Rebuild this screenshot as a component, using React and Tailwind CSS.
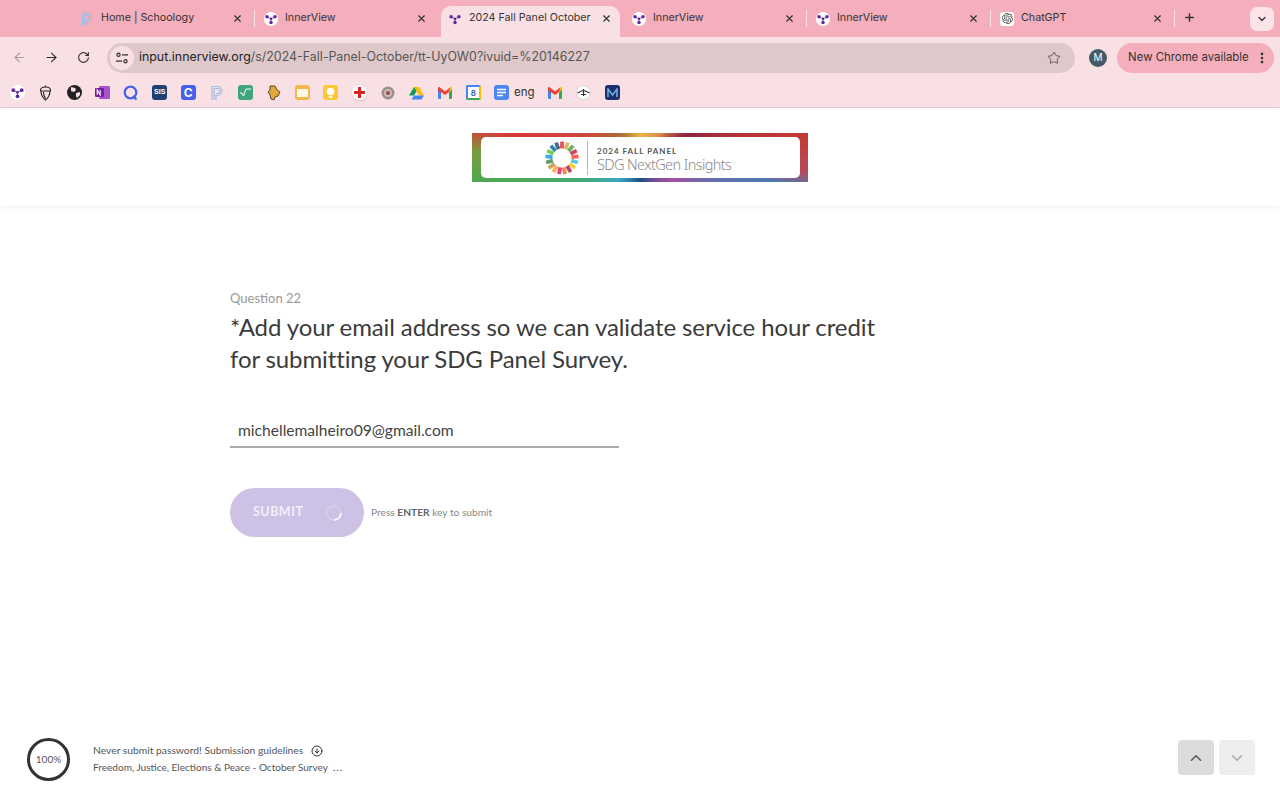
import { ArrowLeft, ArrowRight, RotateCw, Star, X, Plus, ChevronDown, ChevronUp, EllipsisVertical, CircleArrowDown } from 'lucide-react'
import { SiOpenai } from 'react-icons/si'

const chromeFont = "font-['Inter','Liberation_Sans',sans-serif]"
const pageFont = "font-['Lato','Noto_Sans',sans-serif]"

function InnerViewIcon({ size = 16, plain = false }) {
  return (
    <svg width={size} height={size} viewBox="0 0 16 16" className="shrink-0">
      {!plain && <circle cx="8" cy="8" r="8" fill="#fff" />}
      <path d="M3.500 5.500 8 7.800 12.500 5.500M8 7.800V12" stroke="#5b2a9d" strokeWidth=".8" fill="none" />
      <g fill="#5b2a9d">
        <circle cx="3.500" cy="5.500" r="2" />
        <circle cx="12.500" cy="5.500" r="2" />
        <circle cx="8" cy="7.800" r="1.500" />
        <circle cx="8" cy="12" r="2" />
      </g>
    </svg>
  )
}

function PIcon({ size = 16 }) {
  return (
    <svg width={size} height={size} viewBox="0 0 16 16" fill="none" stroke="#9dbfe6" strokeWidth="1.200" className="shrink-0">
      <path d="M3 15V1.500h5.500a4.500 4.500 0 0 1 0 9H6" />
      <path d="M5 15V3.500h3.500a2.500 2.500 0 0 1 0 5H7" />
      <path d="M7 15V10.500" />
    </svg>
  )
}

function Tab({ title, icon, active }) {
  if (active) {
    return (
      <div className="w-[184px] h-full pl-px pr-1 pt-[6px] shrink-0">
        <div className="h-[31px] bg-[#f9e0e5] rounded-t-[10px] pl-[7px] pr-[8px]">
          <div className="h-[25px] flex items-center">
            <div className="w-[14px] flex justify-center">{icon}</div>
            <span className="ml-[7px] text-[10.700px] text-[#333] flex-1 whitespace-nowrap">{title}</span>
            <X size={11} strokeWidth={2.500} className="text-[#333]" />
          </div>
        </div>
      </div>
    )
  }
  return (
    <div className="w-[184px] h-full pt-[6px] shrink-0 flex">
      <div className="h-[25px] flex items-center flex-1 pl-[8px] pr-[13px]">
        <div className="w-[14px] flex justify-center">{icon}</div>
        <span className="ml-[7px] text-[10.700px] text-[#333] flex-1 whitespace-nowrap">{title}</span>
        <X size={11} strokeWidth={2.500} className="text-[#333]" />
      </div>
    </div>
  )
}

function TabSep() {
  return <div className="w-px h-[17px] bg-[#fbe3e8] shrink-0 -ml-[2px] mr-px mt-[10px]" />
}

function TabBar() {
  return (
    <div className="h-[37px] bg-[#f4aebc] flex pl-[72px] relative">
      <Tab title="Home | Schoology" icon={<PIcon size={14} />} />
      <TabSep />
      <Tab title="InnerView" icon={<InnerViewIcon size={14} />} />
      <Tab title="2024 Fall Panel October" icon={<InnerViewIcon size={14} plain />} active />
      <Tab title="InnerView" icon={<InnerViewIcon size={14} />} />
      <TabSep />
      <Tab title="InnerView" icon={<InnerViewIcon size={14} />} />
      <TabSep />
      <Tab
        title="ChatGPT"
        icon={
          <div className="w-[14px] h-[14px] bg-white rounded-[3px] flex items-center justify-center">
            <SiOpenai size={11} className="text-[#444]" />
          </div>
        }
      />
      <TabSep />
      <Plus size={13} strokeWidth={2.500} className="text-[#333] mt-[11px] ml-[7px]" />
      <div className="absolute left-[1250px] top-[7px] w-[24px] h-[24px] bg-[#fbe3e8] rounded-[7px] flex items-center justify-center">
        <ChevronDown size={12} strokeWidth={2.500} className="text-[#333]" />
      </div>
    </div>
  )
}

function Toolbar() {
  return (
    <div className="h-[41px] bg-[#f9e0e5] flex items-center pl-[12px] pr-[6px]">
      <ArrowLeft size={15} strokeWidth={1.800} className="text-[#a99ea1]" />
      <ArrowRight size={15} strokeWidth={1.800} className="text-[#333] ml-[17px]" />
      <RotateCw size={13} strokeWidth={2} className="text-[#333] ml-[18px]" />
      <div className="ml-[17px] w-[969px] h-[30px] rounded-full bg-[#dec8ca] flex items-center pl-[3px] pr-[14px]">
        <div className="w-[24px] h-[24px] rounded-full bg-[#f9e0e5] flex items-center justify-center">
          <svg width="14" height="14" viewBox="0 0 14 14" fill="none" stroke="#333" strokeWidth="1.200">
            <circle cx="3.500" cy="3.800" r="1.600" />
            <path d="M7 3.800h6M1 10.200h6" />
            <circle cx="10.500" cy="10.200" r="1.600" />
          </svg>
        </div>
        <span className="ml-[5px] text-[12.400px] text-[#555] flex-1 whitespace-nowrap">
          <span className="text-[#222]">input.innerview.org</span>/s/2024-Fall-Panel-October/tt-UyOW0?ivuid=%20146227
        </span>
        <Star size={14} strokeWidth={1.600} className="text-[#555]" />
      </div>
      <div className="ml-[14px] w-[18px] h-[18px] rounded-full bg-[#455a64] text-white text-[10px] flex items-center justify-center">M</div>
      <div className="ml-[10px] w-[157px] h-[30px] rounded-full bg-[#f4aebc] flex items-center pl-[11px] pr-[5px]">
        <span className="text-[11.400px] text-[#333] flex-1 whitespace-nowrap">New Chrome available</span>
        <EllipsisVertical size={14} strokeWidth={2.500} className="text-[#333]" />
      </div>
    </div>
  )
}

function Square({ bg, children, radius = 'rounded-[3px]' }) {
  return <div className={`w-[15px] h-[15px] ${radius} ${bg} flex items-center justify-center overflow-hidden`}>{children}</div>
}

function Gmail() {
  return (
    <svg width="14" height="12" viewBox="0 0 14 12">
      <path d="M0 2v9a1 1 0 0 0 1 1h2V5z" fill="#4285f4" />
      <path d="M14 2v9a1 1 0 0 1-1 1h-2V5z" fill="#34a853" />
      <path d="M0 2l3 3v1L0 3.500z" fill="#c5221f" />
      <path d="M11 1l1-.6A1.300 1.300 0 0 1 14 2l-3 3z" fill="#fbbc04" />
      <path d="M0 2A1.300 1.300 0 0 1 2 .4L7 4.400 12 .4 11 5 7 8 3 5 0 2z" fill="#ea4335" />
    </svg>
  )
}

const bookmarks = [
  <InnerViewIcon size={15} />,
  <svg width="15" height="16" viewBox="0 0 15 16" fill="none" stroke="#222" strokeWidth="1.100">
    <path d="M2.500 6c-.5-3 2-4 5-4s5.500 1 5 4z" />
    <path d="M3 6c0 4 2 7 4.500 9C10 13 12 10 12 6" />
    <path d="M7.500 2V.5" />
    <path d="M5.500 7c0 3 1 5 2 6.500" />
  </svg>,
  <svg width="15" height="15" viewBox="0 0 15 15">
    <circle cx="7.500" cy="7.500" r="7.500" fill="#222" />
    <path d="M4 2l4 1 1 2-2 2-3-1zM9 8l4-1 0 3-3 3-1-2z" fill="#f9e0e5" />
  </svg>,
  <svg width="15" height="15" viewBox="0 0 15 15">
    <rect x="4" y="1" width="11" height="13" rx="1" fill="#a855c9" />
    <rect x="0" y="3" width="9" height="9" rx="1" fill="#7719aa" />
    <path d="M2.200 10V5l3 5V5" stroke="#fff" strokeWidth="1.100" fill="none" />
  </svg>,
  <svg width="16" height="16" viewBox="0 0 16 16" fill="none" stroke="#4263eb" strokeWidth="2.200">
    <circle cx="7.500" cy="7.500" r="5.800" />
    <path d="M10 11l3.500 3.500" />
  </svg>,
  <Square bg="bg-[#1d3f72]"><span className="text-[7px] font-bold text-white font-['Liberation_Sans',sans-serif]">SIS</span></Square>,
  <Square bg="bg-[#4361ee]"><span className="text-[12px] font-bold text-white leading-none">C</span></Square>,
  <PIcon />,
  <Square bg="bg-[#3fa57c]">
    <svg width="11" height="9" viewBox="0 0 11 9" fill="none" stroke="#fff" strokeWidth="1"><path d="M0 5h2l1.500 3L6 1h5" /></svg>
  </Square>,
  <svg width="14" height="16" viewBox="0 0 14 16">
    <path d="M3 1l5 0 2 4 3 2-2 4-3 1-1 3-3-1-1-4L1 7l2-2z" fill="#e0a93a" stroke="#5b4a2a" strokeWidth="1" />
  </svg>,
  <Square bg="bg-[#f2b84b]"><div className="w-[11px] h-[8px] bg-[#fff7e6]" /></Square>,
  <Square bg="bg-[#fcc934]">
    <svg width="9" height="12" viewBox="0 0 9 12"><circle cx="4.500" cy="4.500" r="3.800" fill="#fff" /><rect x="2.800" y="9" width="3.400" height="2" fill="#fff" /></svg>
  </Square>,
  <div className="w-[15px] h-[15px] rounded-full bg-white flex items-center justify-center shadow-sm">
    <svg width="11" height="11" viewBox="0 0 11 11"><path d="M4 0h3v4h4v3H7v4H4V7H0V4h4z" fill="#d92323" /></svg>
  </div>,
  <svg width="14" height="14" viewBox="0 0 14 14">
    <circle cx="7" cy="7" r="6.500" fill="#9a8d8d" />
    <circle cx="7" cy="7" r="4" fill="#c8bcbc" />
    <circle cx="7" cy="7" r="2" fill="#a34a4a" />
  </svg>,
  <svg width="15" height="14" viewBox="0 0 15 14">
    <path d="M5 0h5l-5 8.500H0z" fill="#0f9d58" transform="translate(0 1)" />
    <path d="M5 1h5l5 8.500h-5z" fill="#fbbc04" />
    <path d="M2.500 13.500 5 9.500h10l-2.500 4z" fill="#4285f4" />
  </svg>,
  <Gmail />,
  <div className="w-[15px] h-[15px] bg-white rounded-[2px] border-[2px] border-t-[#4285f4] border-l-[#4285f4] border-r-[#fbbc04] border-b-[#34a853] flex items-center justify-center">
    <span className="text-[8px] font-semibold text-[#1a56c4] leading-none">8</span>
  </div>,
  <Square bg="bg-[#4c86f0]">
    <svg width="9" height="9" viewBox="0 0 9 9" stroke="#fff" strokeWidth="1.300"><path d="M0 1.500h9M0 4.500h9M0 7.500h6" /></svg>
  </Square>,
]

function BookmarksBar() {
  return (
    <div className={`h-[30px] bg-[#f9e0e5] border-b border-[#e6d3d6] flex items-center pl-[3px] ${chromeFont}`}>
      {bookmarks.map((b, i) => (
        <div key={i} className="w-[28.500px] flex justify-center shrink-0">{b}</div>
      ))}
      <span className="text-[11.500px] text-[#333] -ml-[2px] w-[27px]">eng</span>
      <div className="w-[28.500px] flex justify-center shrink-0"><Gmail /></div>
      <div className="w-[28.500px] flex justify-center shrink-0">
        <svg width="15" height="15" viewBox="0 0 15 15">
          <circle cx="7.500" cy="7.500" r="7" fill="#fff" stroke="#bbb" strokeWidth=".5" />
          <path d="M1.500 8c2-1 4-2.500 6-2.500S11.500 7 13.500 8M7.500 4v7M5 9.500h5" stroke="#333" strokeWidth="1.200" fill="none" />
        </svg>
      </div>
      <div className="w-[28.500px] flex justify-center shrink-0">
        <Square bg="bg-[#1c2f6b]">
          <svg width="11" height="9" viewBox="0 0 11 9" fill="none" stroke="#6fb3e8" strokeWidth="1.500"><path d="M1 9V1l4.500 6L10 1v8" /></svg>
        </Square>
      </div>
    </div>
  )
}

const sdgColors = ['#e5243b', '#dda63a', '#4c9f38', '#c5192d', '#ff3a21', '#26bde2', '#fcc30b', '#a21942', '#fd6925', '#dd1367', '#fd9d24', '#bf8b2e', '#3f7e44', '#0a97d9', '#56c02b', '#00689d', '#19486a']

function SdgWheel() {
  return (
    <svg width="34" height="34" viewBox="-17 -17 34 34" opacity=".8">
      {sdgColors.map((c, i) => (
        <rect key={i} x="-1.900" y="-16.500" width="3.800" height="7" fill={c} transform={`rotate(${(i * 360) / 17})`} />
      ))}
    </svg>
  )
}

function Banner() {
  return (
    <div className="w-[336px] h-[49px] p-[4px] pl-[9px] pr-[8px] bg-[conic-gradient(#ecb540_0deg,#e0904a_40deg,#8c2040_65deg,#c13a34_82deg,#b84a5a_95deg,#4f78b0_100deg,#a54fa0_125deg,#1e4f86_180deg,#3aa8c8_225deg,#4fa850_262deg,#7a9a40_272deg,#d8393a_280deg,#a8703a_320deg,#ecb540_360deg)]">
      <div className="h-full bg-white rounded-[5px] flex items-center pl-[64px]">
        <SdgWheel />
        <div className="w-px h-[34px] bg-[#bbb] ml-[8px]" />
        <div className="ml-[9px] pt-[4px] flex flex-col">
          <span className="text-[8px] leading-[10px] font-bold tracking-[1px] text-[#555]">2024 FALL PANEL</span>
          <span className="text-[14.500px] leading-[17px] font-light text-[#8a8a8a] font-['Noto_Sans',sans-serif] tracking-[-0.6px] whitespace-nowrap">SDG NextGen Insights</span>
        </div>
      </div>
    </div>
  )
}

export default function App() {
  return (
    <div className="w-[1280px] h-[800px] flex flex-col bg-white overflow-hidden">
      <div className={chromeFont}>
        <TabBar />
        <Toolbar />
      </div>
      <BookmarksBar />
      <div className={`flex-1 flex flex-col ${pageFont}`}>
        <header className="h-[98px] flex justify-center pt-[25px] shadow-[0_1px_4px_rgba(0,0,0,0.07)]">
          <Banner />
        </header>
        <main className="pl-[230px] pt-[82px]">
          <div className="text-[13px] leading-[20px] text-[#999]">Question 22</div>
          <h1 className="mt-[3px] w-[670px] text-[24px] leading-[32px] tracking-[-0.11px] text-[#3b3b3b]">
            *Add your email address so we can validate service hour credit for submitting your SDG Panel Survey.
          </h1>
          <div className="mt-[38px] w-[389px] h-[35px] border-b-2 border-[#aaa] pl-[8px] pt-[5px] text-[15.600px] leading-[24px] text-[#444]">
            michellemalheiro09@gmail.com
          </div>
          <div className="mt-[40px] flex items-center">
            <button className="w-[134px] h-[49px] rounded-full bg-[#cdc2e5] flex items-center pl-[23px]">
              <span className="text-[12.500px] font-bold tracking-[0.5px] text-[#f3effa]">SUBMIT</span>
              <svg width="18" height="18" viewBox="0 0 18 18" fill="none" className="ml-[22px]">
                <circle cx="9" cy="9" r="7" stroke="#d6cdea" strokeWidth="1.500" />
                <path d="M16 9a7 7 0 0 1-7 7" stroke="#fff" strokeWidth="1.500" />
              </svg>
            </button>
            <span className="ml-[7px] text-[10.200px] text-[#888]">
              Press <b className="text-[#666]">ENTER</b> key to submit
            </span>
          </div>
        </main>
        <footer className="mt-auto h-[62px] flex items-start pl-[27px] pr-[25px]">
          <div className="w-[43px] h-[43px] rounded-full border-[3px] border-[#333] flex items-center justify-center text-[10px] text-[#555]">100%</div>
          <div className="ml-[23px] mt-[4px] text-[#555]">
            <div className="flex items-center h-[17px] text-[10.300px]">
              Never submit password! Submission guidelines
              <CircleArrowDown size={12} className="ml-[8px] text-[#333]" />
            </div>
            <div className="flex items-center h-[17px] text-[10.050px]">
              Freedom, Justice, Elections &amp; Peace - October Survey
              <span className="ml-[5px] text-[#333] tracking-[1px]">...</span>
            </div>
          </div>
          <div className="ml-auto flex gap-[5px] mt-[2px]">
            <div className="w-[36px] h-[35px] rounded-[4px] bg-[#dcdcdc] flex items-center justify-center">
              <ChevronUp size={18} className="text-[#555]" />
            </div>
            <div className="w-[36px] h-[35px] rounded-[4px] bg-[#eeeeee] flex items-center justify-center">
              <ChevronDown size={18} className="text-[#aaa]" />
            </div>
          </div>
        </footer>
      </div>
    </div>
  )
}
